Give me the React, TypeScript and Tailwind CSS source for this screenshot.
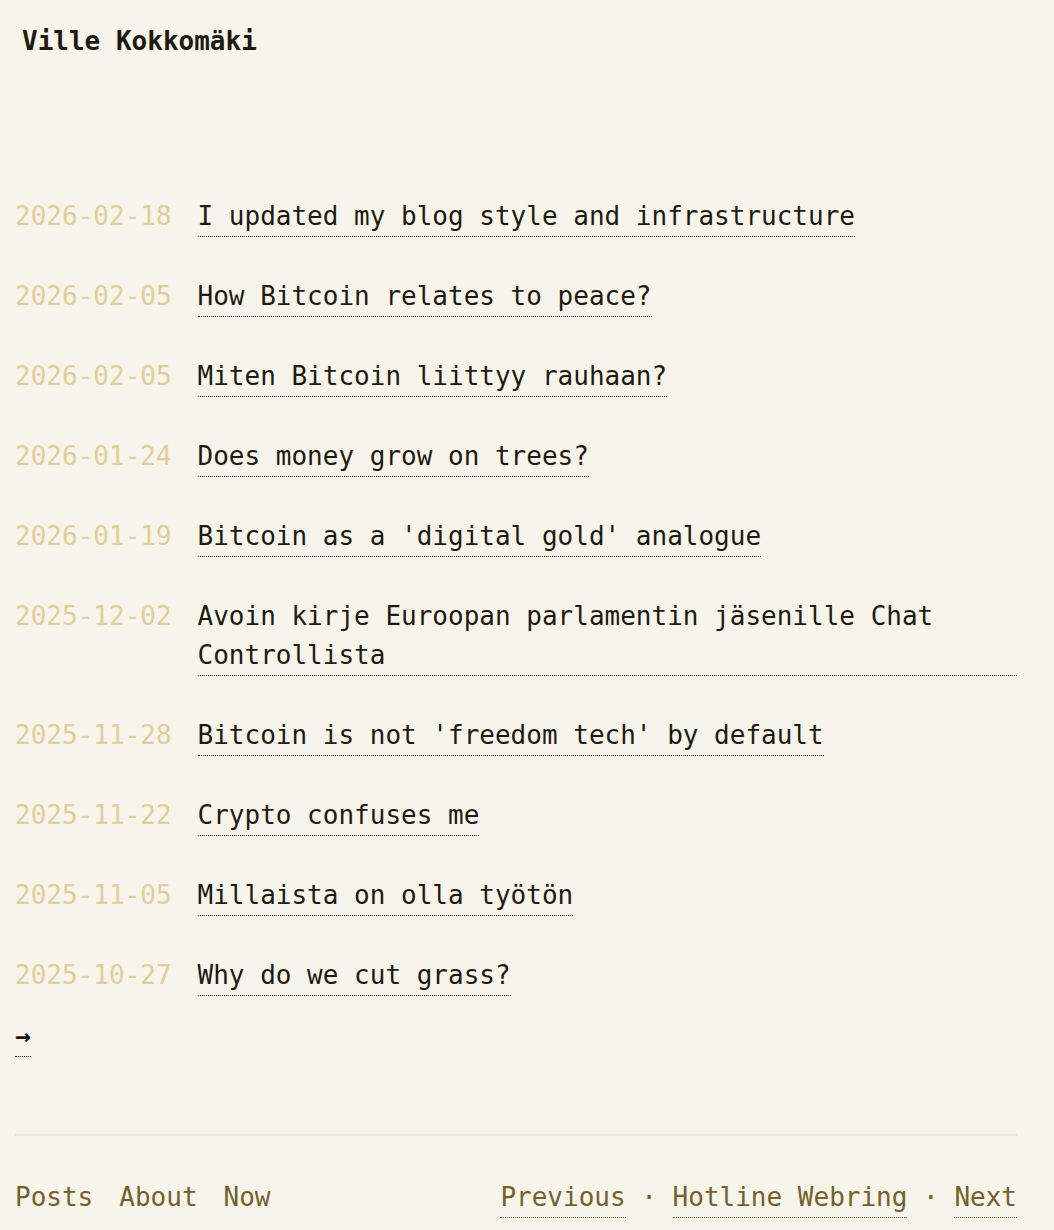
const posts = [
  { date: "2026-02-18", title: "I updated my blog style and infrastructure" },
  { date: "2026-02-05", title: "How Bitcoin relates to peace?" },
  { date: "2026-02-05", title: "Miten Bitcoin liittyy rauhaan?" },
  { date: "2026-01-24", title: "Does money grow on trees?" },
  { date: "2026-01-19", title: "Bitcoin as a 'digital gold' analogue" },
  { date: "2025-12-02", title: "Avoin kirje Euroopan parlamentin jäsenille Chat Controllista" },
  { date: "2025-11-28", title: "Bitcoin is not 'freedom tech' by default" },
  { date: "2025-11-22", title: "Crypto confuses me" },
  { date: "2025-11-05", title: "Millaista on olla työtön" },
  { date: "2025-10-27", title: "Why do we cut grass?" },
];

const App = () => {
  return (
    <div className="min-h-screen bg-[#f7f4ec] pl-[15px] pr-[37px] pt-[22px] pb-[15px] font-['DejaVu_Sans_Mono','Liberation_Mono',monospace] text-[26px] leading-[39px] text-[#1e1a0f]">
      <header className="pl-[7px] font-bold">Ville Kokkomäki</header>

      <ul className="mt-[136px] flex flex-col gap-[40px]">
        {posts.map((p, i) => (
          <li key={i} className="grid grid-cols-[auto_1fr] gap-x-[26px]">
            <span className="text-[#e3cd98]">{p.date}</span>
            <a className="inline-block justify-self-start cursor-pointer border-b border-dotted border-[#1e1a0f]">
              {p.title}
            </a>
          </li>
        ))}
      </ul>

      <div className="mt-[21px]">
        <a className="inline-block cursor-pointer border-b border-dotted border-[#1e1a0f] font-bold">→</a>
      </div>

      <hr className="mt-[77px] border-0 border-t-2 border-[#efe7d6]" />

      <footer className="mt-[42px] flex justify-between text-[#76602a]">
        <nav className="flex gap-[26px]">
          <a className="cursor-pointer">Posts</a>
          <a className="cursor-pointer">About</a>
          <a className="cursor-pointer">Now</a>
        </nav>
        <div className="whitespace-pre">
          <a className="inline-block cursor-pointer border-b border-dotted border-[#76602a]">Previous</a>
          {" · "}
          <a className="inline-block cursor-pointer border-b border-dotted border-[#76602a]">Hotline Webring</a>
          {" · "}
          <a className="inline-block cursor-pointer border-b border-dotted border-[#76602a]">Next</a>
        </div>
      </footer>
    </div>
  );
};

export default App;
